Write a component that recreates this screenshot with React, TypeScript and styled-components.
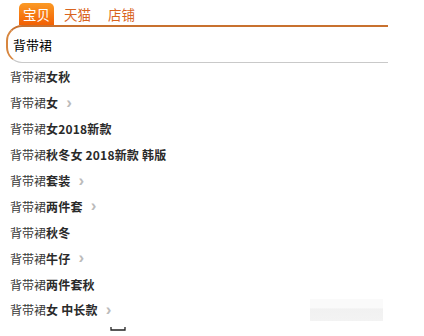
import React from 'react';
import styled, { createGlobalStyle } from 'styled-components';

const GlobalStyle = createGlobalStyle`
	body {
		margin: 0;
		background: #fff;
		font-family: "Noto Sans CJK SC", "Liberation Sans", sans-serif;
	}
`;

const Page = styled.div`
	position: relative;
	width: 424px;
	height: 336px;
	overflow: hidden;
	background: #fff;
`;

const Tabs = styled.div`
	display: flex;
	align-items: flex-end;
	height: 25px;
	padding-left: 19px;
`;

const Tab = styled.div<{ $active?: boolean }>`
	height: 22px;
	padding: ${(p) => (p.$active ? '0 4px' : '0')};
	margin-right: ${(p) => (p.$active ? '10px' : '17px')};
	display: flex;
	align-items: center;
	font-size: 13.5px;
	line-height: 22px;
	border-radius: 5px 5px 0 0;
	color: ${(p) => (p.$active ? '#fff' : '#d9651f')};
	background: ${(p) => (p.$active ? 'linear-gradient(#fb9a25, #f26004)' : 'transparent')};
`;

const SearchBox = styled.div`
	margin-left: 6px;
	width: 375px;
	height: 35px;
	box-sizing: content-box;
	border-top: 2px solid #c8712f;
	border-left: 2px solid #d7863f;
	border-bottom: 1px solid #c9c9c9;
	border-radius: 16px 0 0 16px;
	display: flex;
	align-items: center;
	padding-left: 5px;
	font-size: 13px;
	color: #000;
`;

const List = styled.ul`
	list-style: none;
	margin: 1px 0 0;
	padding: 0 0 0 10px;
`;

const Item = styled.li`
	height: 25.9px;
	display: flex;
	align-items: center;
	font-size: 12px;
	color: #3a3a3a;
	white-space: pre;
`;

const Strong = styled.b`
	font-weight: 700;
	color: #2a2a2a;
	letter-spacing: 0.2px;
`;

const Chevron = styled.span`
	margin-left: 8px;
	color: #bbbbbb;
	font-size: 17px;
	line-height: 12px;
	font-weight: 700;
	font-family: "Liberation Sans", sans-serif;
`;

const Caret = styled.svg`
	display: block;
	margin: 1px 0 0 110px;
`;

const Watermark = styled.div`
	position: absolute;
	left: 310px;
	top: 299px;
	width: 73px;
	height: 22px;
	background: linear-gradient(#fafafa 40%, #f1f1f1 45%, #f3f3f3);
`;

const suggestions: { rest: string; more?: boolean }[] = [
	{ rest: '女秋' },
	{ rest: '女', more: true },
	{ rest: '女2018新款' },
	{ rest: '秋冬女 2018新款 韩版' },
	{ rest: '套装', more: true },
	{ rest: '两件套', more: true },
	{ rest: '秋冬' },
	{ rest: '牛仔', more: true },
	{ rest: '两件套秋' },
	{ rest: '女 中长款', more: true },
];

export default function App() {
	return (
		<Page>
			<GlobalStyle />
			<Tabs>
				<Tab $active>宝贝</Tab>
				<Tab>天猫</Tab>
				<Tab>店铺</Tab>
			</Tabs>
			<SearchBox>背带裙</SearchBox>
			<List>
				{suggestions.map(({ rest, more }, i) => (
					<Item key={i}>
						背带裙<Strong>{rest}</Strong>
						{more && <Chevron>›</Chevron>}
					</Item>
				))}
			</List>
			<Caret width="16" height="8" viewBox="0 0 16 8">
				<path d="M1 3v3h14V3" fill="none" stroke="#222" strokeWidth="1.3" />
			</Caret>
			<Watermark />
		</Page>
	);
}
